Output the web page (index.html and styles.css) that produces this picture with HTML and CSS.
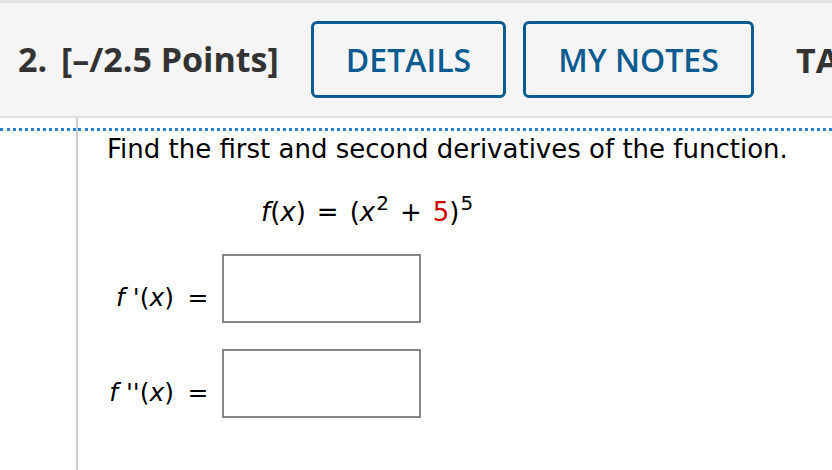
FILE: index.html
```html
<!DOCTYPE html>
<html>
<head>
<meta charset="utf-8">
<link rel="stylesheet" href="styles.css">
</head>
<body>
<div class="header">
  <div class="title"><span class="num">2.</span> [–/2.5 Points]</div>
  <button class="btn details">DETAILS</button>
  <button class="btn notes">MY NOTES</button>
  <div class="ta">TA</div>
</div>
<div class="main">
  <div class="side"><div class="dots"></div></div>
  <div class="content">
    <div class="dots"></div>
    <p class="prompt">Find the first and second derivatives of the function.</p>
    <div class="formula"><i>f</i>(<i>x</i>)<span class="op">=</span>(<i>x</i><sup>2</sup><span class="op">+</span><span class="red">5</span>)<sup>5</sup></div>
    <div class="row"><span class="lbl"><i>f</i> '(<i>x</i>)</span><span class="eq">=</span><span class="box"></span></div>
    <div class="row"><span class="lbl"><i>f</i> ''(<i>x</i>)</span><span class="eq">=</span><span class="box"></span></div>
  </div>
</div>
</body>
</html>
```
FILE: styles.css
```css
html, body { margin: 0; padding: 0; background: #fff; overflow: hidden; }
body { width: 832px; height: 470px; }
.header {
  height: 113px;
  background: #f5f5f5;
  border-top: 3px solid #e2e2e2;
  border-bottom: 2px solid #e0e0e0;
  display: flex;
  align-items: center;
  padding-left: 18px;
  box-sizing: content-box;
  white-space: nowrap;
  overflow: hidden;
}
.header > * { flex: none; }
.title {
  font-family: "Open Sans", sans-serif;
  font-weight: 700;
  font-size: 34px;
  color: #333;
  width: 293px;
  margin-top: -2px;
}
.num { margin-right: 5px; }
.btn {
  font-family: "Open Sans", sans-serif;
  font-weight: 600;
  font-size: 32px;
  color: #0a5b8f;
  background: transparent;
  border: 3px solid #0a5b8f;
  border-radius: 6px;
  height: 77px;
  padding: 0;
  margin-top: -1px;
}
.details { width: 195px; }
.notes { width: 231px; margin-left: 17px; }
.ta {
  font-family: "Open Sans", sans-serif;
  font-weight: 700;
  font-size: 34px;
  color: #333;
  margin-left: 42px;
}
.main { display: flex; height: 352px; }
.side { width: 76px; border-right: 2px solid #cccccc; flex: none; }
.dots { margin-top: 10px; border-top: 3px dotted #2b7fcf; }
.content { flex: 1; }
.prompt {
  font-family: "DejaVu Sans", Verdana, sans-serif;
  font-size: 26px;
  color: #000;
  margin: 2px 0 0 29px;
  line-height: 32px;
}
.formula {
  font-family: "DejaVu Sans", Verdana, sans-serif;
  font-size: 26px;
  margin: 31px 0 0 183px;
  line-height: 32px;
}
.op { margin: 0 11px; }
.formula sup { font-size: 20px; vertical-align: 11px; line-height: 0; margin-left: 1px; }
.red { color: #cc0000; }
.row {
  display: flex;
  align-items: center;
  font-family: "DejaVu Sans", Verdana, sans-serif;
  font-size: 25px;
  height: 69px;
  margin-top: 26px;
}
.row:first-of-type { margin-top: 4px; }
.lbl { width: 96px; text-align: right; padding-top: 18px; }
.eq { width: 48px; text-align: center; padding-top: 18px; }
.box {
  width: 195px; height: 65px;
  border: 2px solid #858585;
  margin-left: 0;
}
```
